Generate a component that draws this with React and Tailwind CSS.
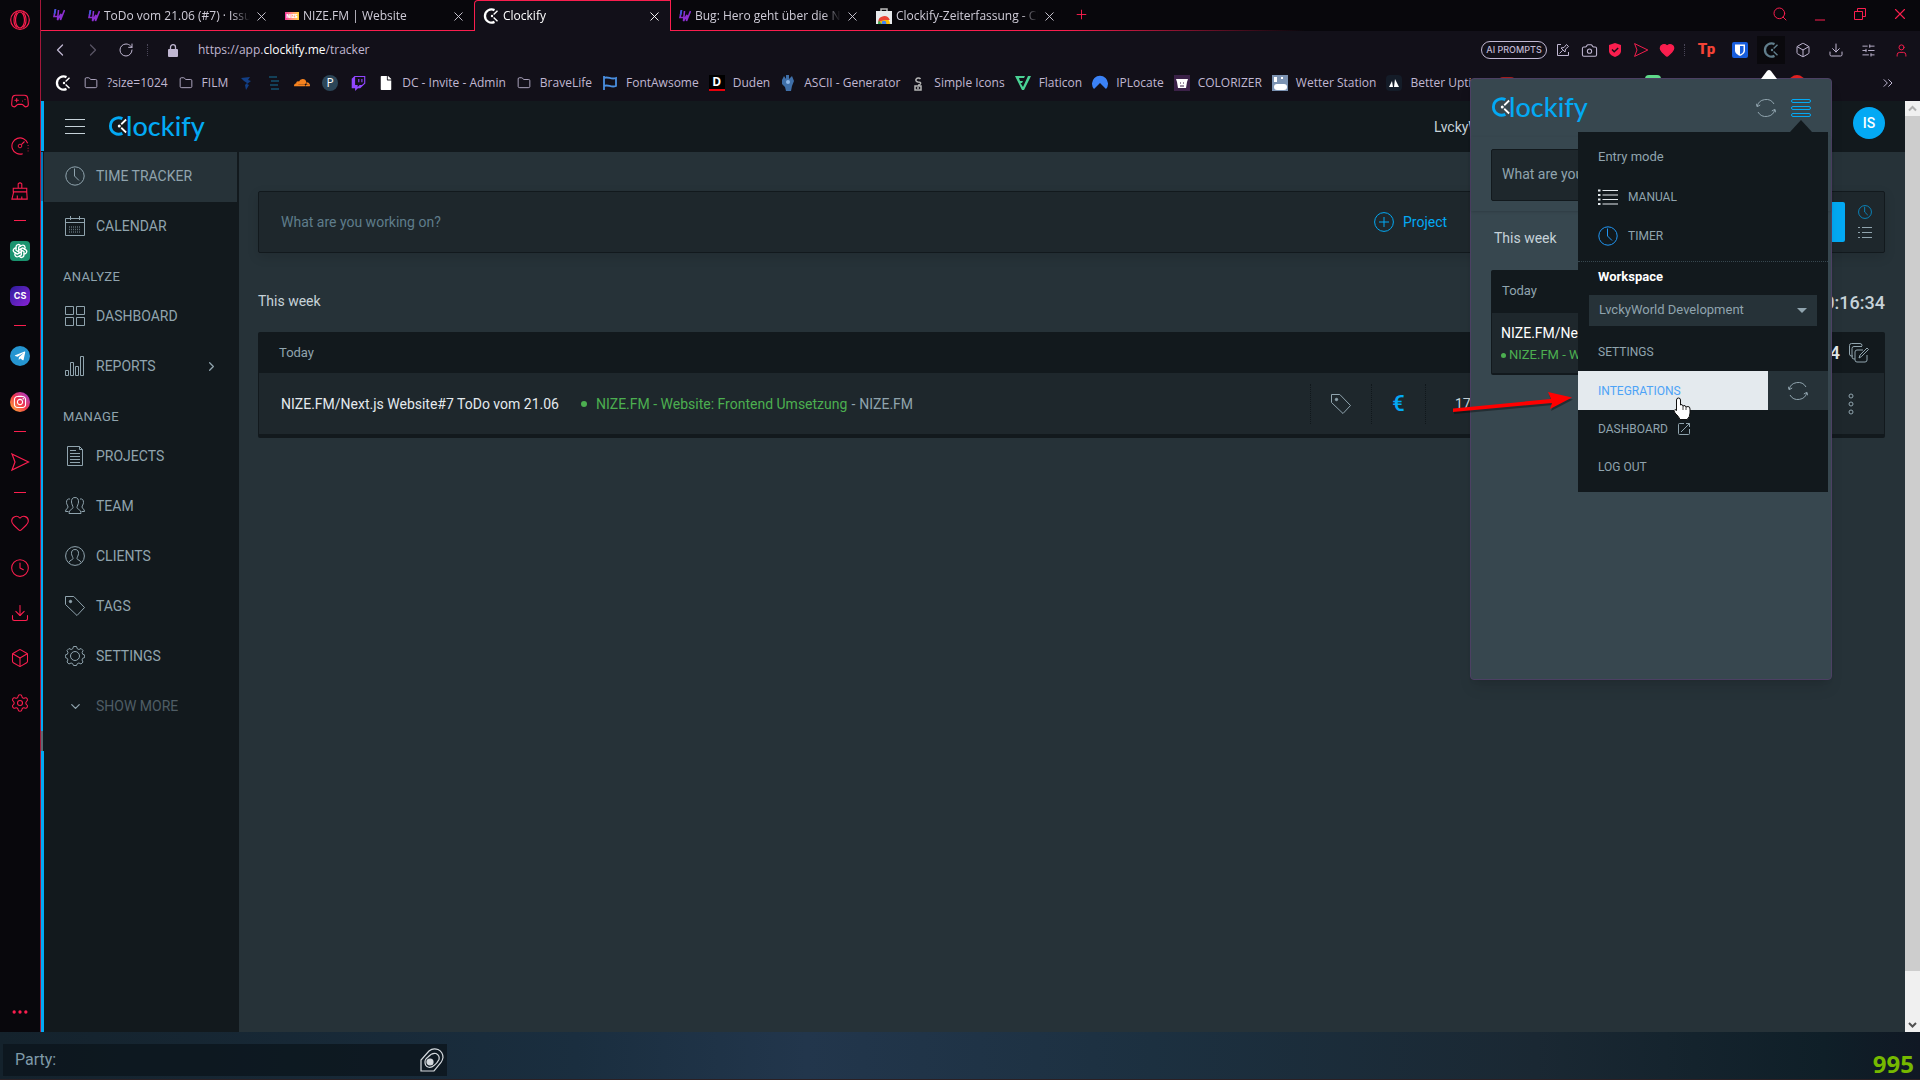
import {
  Camera, ChevronDown, ChevronLeft, ChevronRight, ChevronsRight, Clock, Box, Download, Ellipsis, Folder,
  Gamepad2, Heart, Minus, Plus, RotateCw, Search, Settings, SlidersHorizontal, User, X
} from 'lucide-react'
import { FaTwitch, FaInstagram, FaTelegramPlane, FaCloudflare, FaFile } from 'react-icons/fa'
import { TbBrandOpenai } from 'react-icons/tb'

// Thin line icon on a 20px grid
function Line({ children, className = 'w-5 h-5' }) {
  return (
    <svg viewBox="0 0 20 20" fill="none" stroke="currentColor" strokeWidth="1" className={`shrink-0 ${className}`} aria-hidden="true">
      {children}
    </svg>
  )
}

const ClockIcon = ({ className }) => (
  <Line className={className}><circle cx="10" cy="10" r="9.2" /><path d="M9.5 2.5V10l4.5 4.5" /></Line>
)
const TagIcon = ({ className }) => (
  <Line className={className}><path d="M.5.5h8.300l10.700 11-7.500 8L.5 8.500z" /><circle cx="5.500" cy="5.500" r="1.200" fill="currentColor" /></Line>
)
const ListIcon = ({ className }) => (
  <Line className={className}>
    <path d="M4.500 3.500H20M4.500 8H20M4.500 12.500H20M4.500 17H20" />
    <path d="M0 3.500h2.500M0 8h2.500M0 12.500h2.500M0 17h2.500" strokeWidth="2" />
  </Line>
)
const SmallListIcon = () => (
  <svg viewBox="0 0 14 14" className="w-3.5 h-3.5" stroke="currentColor" aria-hidden="true">
    <path d="M4 2.500h10M4 7.500h10M4 12.500h10" />
    <path d="M0 2.500h2M0 7.500h2M0 12.500h2" />
  </svg>
)
const SyncIcon = ({ className }) => (
  <Line className={className}>
    <path d="M1.200 8.500A9 8.500 0 0 1 18 6M18.800 11.500A9 8.500 0 0 1 2 14" />
    <path d="M0 5.500l1.200 3.200L4.200 7M20 14.500l-1.200-3.200L15.800 13" />
  </Line>
)
const SendIcon = ({ className }) => (
  <Line className={className}><path d="M2 2l16.500 8L2 18l3-8z" strokeWidth="1.200" /></Line>
)

function ClockifyMark({ className, arms = 'currentColor' }) {
  return (
    <svg viewBox="0 0 16 16" fill="none" className={`shrink-0 ${className}`} aria-hidden="true">
      <path d="M11.500 2.100A6.600 6.600 0 1 0 11.500 13.900" stroke="currentColor" strokeWidth="2.300" />
      <path d="M10.600 6.600L14.500 2.800M10.600 9.400l3.900 3.800" stroke={arms} strokeWidth="1.400" />
      <circle cx="9" cy="8" r="1.200" fill={arms} />
    </svg>
  )
}

function Logo() {
  return (
    <span className="flex items-center pl-px pb-0.5 text-[#03a9f4]">
      <ClockifyMark className="w-5 h-5" arms="#fff" />
      <span className="-ml-0.5 font-['Lato'] text-[27px] leading-7 font-medium">lockify</span>
    </span>
  )
}

function LwIcon() {
  return (
    <svg viewBox="0 0 12 12" className="w-3 h-3 shrink-0" fill="none" stroke="#8b2fd0" strokeWidth="1.600" aria-hidden="true">
      <path d="M2.500 0L1 7.500h4M5.500 1L4.500 11l3.500-6-.5 6L11.500 1" />
      <path d="M2.500 0L1.500 5" stroke="#3b5bdb" />
    </svg>
  )
}

function StoreIcon() {
  return (
    <svg viewBox="0 0 16 16" className="w-4 h-4 shrink-0" aria-hidden="true">
      <path d="M5 3V1h6v2" fill="none" stroke="#bbb" strokeWidth="1.500" />
      <path d="M0 3h16v13H0z" fill="#e8eaed" />
      <path d="M2 16a6 6 0 0 1 12 0z" fill="#fbbc04" />
      <path d="M2.200 14a6 6 0 0 1 11.600-2H8z" fill="#ea4335" />
      <path d="M2 16a6 6 0 0 1 1-3.500L5.500 16z" fill="#34a853" />
      <circle cx="8" cy="15" r="2.300" fill="#4285f4" />
    </svg>
  )
}

const NizeIcon = () => (
  <span className="w-3.5 h-2 shrink-0 bg-gradient-to-r from-pink-500 to-amber-300 text-[5px] leading-2 font-black text-white text-center">NIZE</span>
)

const TABS = [
  { title: 'ToDo vom 21.06 (#7) · Issue #7', icon: <LwIcon /> },
  { title: 'NIZE.FM | Website', icon: <NizeIcon /> },
  { title: 'Clockify', icon: <ClockifyMark className="w-4 h-4 text-white" />, active: true },
  { title: 'Bug: Hero geht über die Navbar', icon: <LwIcon /> },
  { title: 'Clockify-Zeiterfassung - Chrome', icon: <StoreIcon /> },
]

const folder = <Folder size={14} strokeWidth={1.5} />

const BOOKMARKS = [
  { icon: <ClockifyMark className="w-4 h-4 text-white" /> },
  { icon: folder, label: '?size=1024' },
  { icon: folder, label: 'FILM' },
  { icon: <svg viewBox="0 0 16 16" className="w-4 h-4"><path d="M3 3l9-1-2 3 3 1-4 3 2 1-3 5-1-5 2-2-3-2z" fill="#123f86" /></svg> },
  { icon: <svg viewBox="0 0 16 16" className="w-4 h-4" stroke="#15506e" strokeWidth="1.500"><path d="M3 2h8M5 6h8M4 10h8M5 14h8" /></svg> },
  { icon: <FaCloudflare size={16} color="#f6821f" /> },
  { icon: <span className="w-4 h-4 rounded-full bg-[#2c4658] text-white text-xs leading-4 text-center">P</span> },
  { icon: <FaTwitch size={15} color="#9146ff" /> },
  { icon: <FaFile size={14} color="#fff" />, label: 'DC - Invite - Admin' },
  { icon: folder, label: 'BraveLife' },
  { icon: <svg viewBox="0 0 16 16" className="w-4 h-4" fill="none" stroke="#4a8fe0" strokeWidth="1.800"><path d="M2 1v14M2 3c4-2 7 2 12 0v8c-5 2-8-2-12 0" /></svg>, label: 'FontAwsome' },
  { icon: <span className="w-4 h-4 bg-black border-b-2 border-red-600 text-white text-xs leading-3.5 text-center font-bold">D</span>, label: 'Duden' },
  { icon: <svg viewBox="0 0 16 16" className="w-4 h-4"><path d="M4 1l2 3V0h3v4l3-3 2 5-2 5-1 5H6l-1-4-3-3V5z" fill="#3f6fa8" /><circle cx="8" cy="7" r="2" fill="#8fb8e8" /></svg>, label: 'ASCII - Generator' },
  { icon: <svg viewBox="0 0 16 16" className="w-4 h-4" fill="none" stroke="#b5b5b5" strokeWidth="1.500"><path d="M10.500 4a2.500 2 0 1 0-2.500 3c4 0 3 3 0 3M5 11h6v4H5zM7 13h2" /></svg>, label: 'Simple Icons' },
  { icon: <svg viewBox="0 0 16 16" className="w-4 h-4" fill="#4ad295"><path d="M0 1h10l-1 2H4l1 3h3L7 8H5.500L8 12l5-11h3L9 15H7z" /></svg>, label: 'Flaticon' },
  { icon: <svg viewBox="0 0 16 16" className="w-4 h-4" fill="#3b82f6"><path d="M2 14A8 8 0 1 1 14 14L8 8z" /></svg>, label: 'IPLocate' },
  { icon: <svg viewBox="0 0 16 16" className="w-4 h-4"><path d="M0 0h16v16H0z" fill="#3b2148" /><path d="M2 4h12l-1 3-1 6H4L3 7z" fill="#fff" /><path d="M6 8h1M9 8h1M6 11h4" stroke="#3b2148" /></svg>, label: 'COLORIZER' },
  { icon: <svg viewBox="0 0 16 16" className="w-4 h-4"><path d="M0 0h16v16H0z" fill="#7c93b2" /><path d="M2 2h3v5H2zM9 2h2v2H9z" fill="#fff" /><rect x="2" y="9" width="13" height="6" rx="3" fill="#fff" /></svg>, label: 'Wetter Station' },
  { icon: <svg viewBox="0 0 16 16" className="w-4 h-4"><rect width="16" height="16" rx="4" fill="#141c28" /><path d="M3 12l3-6 1 6zM8 12l1-8 4 8z" fill="#fff" /></svg>, label: 'Better Uptime' },
]

const NAV = [
  { label: 'TIME TRACKER', icon: <ClockIcon />, active: true },
  { label: 'CALENDAR', icon: <Line><path d="M.5 2.500h19v17H.5zM.5 6.500h19M5.500 0v4M14.500 0v4" /><path d="M4 11h12M4 13.500h12M4 16h12" strokeWidth="1.500" strokeDasharray="1 1" opacity=".6" /></Line> },
  { heading: 'ANALYZE' },
  { label: 'DASHBOARD', icon: <Line><path d="M.5.5h8v8h-8zM11.500.5h8v8h-8zM.5 11.500h8v8h-8zM11.500 11.500h8v8h-8z" /></Line> },
  { label: 'REPORTS', icon: <Line><path d="M.5 14.500h3v5h-3zM5.500 6.500h3v13h-3zM10.500 10.500h3v9h-3zM15.500.5h3v19h-3z" /></Line>, more: true },
  { heading: 'MANAGE' },
  { label: 'PROJECTS', icon: <Line><path d="M2.500.5h12l3 3v16h-15zM14.500.5v3h3M5 4.500h6M5 7.500h10M5 10.500h10M5 13.500h10M5 16.500h10" /></Line> },
  { label: 'TEAM', icon: <Line><path d="M10 1.500c3 0 3.500 2 3.500 4.500 0 2-1.500 4-1.500 5.500 0 2 4 1.500 4 6H4c0-4.500 4-4 4-6C8 10 6.500 8 6.500 6c0-2.500.5-4.500 3.500-4.500z" /><path d="M5 3C2.500 2.500 1.500 4 1.500 6.500c0 2 1.500 3 1.500 4.500S.5 13 .5 15.500h3M15 3c2.500-.5 3.500 1 3.500 3.500 0 2-1.500 3-1.500 4.500s2.500 2 2.500 4.500h-3" /></Line> },
  { label: 'CLIENTS', icon: <Line><circle cx="10" cy="10" r="9.400" /><path d="M10 3.500c3 0 3.500 2 3.500 4 0 2-1.500 3.500-1.500 5s3.500 1.500 4 4M10 3.500c-3 0-3.500 2-3.500 4 0 2 1.500 3.500 1.500 5s-3.500 1.500-4 4" /></Line> },
  { label: 'TAGS', icon: <TagIcon /> },
  { label: 'SETTINGS', icon: <Line><circle cx="10" cy="10" r="4.500" /><path d="M8.500.5h3l.8 2.300 1.600.7 2.200-1 1.900 2-.9 2.200.7 1.600 1.900.7v2.500l-2 .8-.7 1.600 1 2.200-2 1.900-2.100-1-1.600.7-.8 1.800h-3l-.8-1.800-1.600-.7-2.200 1-1.900-2 .9-2.100-.7-1.600-1.900-.8V9l2-.7.7-1.600-1-2.200 2-2 2.200 1 1.500-.7z" /></Line> },
]

function TabBar() {
  return (
    <div className="flex h-[31px] bg-[#08070c] text-[#cfccd8]">
      <button aria-label="Pinned tab" className="w-[39px] h-full flex items-center pl-3 border-b border-[#fa1e4e]"><LwIcon /></button>
      {TABS.map(tab => (
        <div
          key={tab.title}
          className={`w-[197px] flex items-center gap-1 pl-2 pr-2 border-[#fa1e4e] ${
            tab.active ? 'border-t border-x rounded-tl bg-[#121019] text-white' : 'border-b pt-0.5'
          }`}
        >
          {tab.icon}
          <span className="flex-1 min-w-0 overflow-hidden whitespace-nowrap [mask-image:linear-gradient(to_right,#000_88%,transparent)]">{tab.title}</span>
          <button aria-label={`Close ${tab.title}`}><X size={15} strokeWidth={1.5} /></button>
        </div>
      ))}
      <div className="flex-1 flex flex-col justify-between text-[#fa1e4e]">
        <div className="flex justify-between">
          <button aria-label="New tab" className="w-8 h-7 flex items-center justify-center"><Plus size={15} strokeWidth={1.5} /></button>
          <div className="flex">
            <button aria-label="Search" className="w-10 h-7 flex items-center justify-center"><Search size={16} strokeWidth={1.5} /></button>
            <button aria-label="Minimize" className="w-10 h-7 flex items-end justify-center"><Minus size={16} strokeWidth={1.5} /></button>
            <button aria-label="Restore" className="w-10 h-7 flex items-center justify-center">
              <svg viewBox="0 0 12 12" className="w-3 h-3" fill="none" stroke="currentColor"><path d="M.5 3.500h8v8h-8zM3.500 3.500v-3h8v8h-3" /></svg>
            </button>
            <button aria-label="Close window" className="w-10 h-7 flex items-center justify-center"><X size={18} strokeWidth={1.5} /></button>
          </div>
        </div>
        <div className="h-px w-60 bg-gradient-to-r from-[#fa1e4e] to-transparent" />
      </div>
    </div>
  )
}

function Toolbar() {
  const small = 'w-[26px] h-7 flex items-center justify-center'
  const wide = 'w-[33px] h-7 flex items-center justify-center'
  return (
    <div className="flex items-center h-[38px] pl-0.5 pr-0.5 text-[#c0b7d2]">
      <button aria-label="Back" className={wide}><ChevronLeft size={20} strokeWidth={1.5} /></button>
      <button aria-label="Forward" className={`${wide} opacity-40`}><ChevronRight size={20} strokeWidth={1.5} /></button>
      <button aria-label="Reload" className={wide}><RotateCw size={16} strokeWidth={1.5} /></button>
      <span className="w-1.5 h-3 border-r border-dotted border-[#4a4658]" />
      <svg viewBox="0 0 10 13" className="w-2.5 h-[13px] ml-5 shrink-0" aria-hidden="true">
        <path d="M2.500 6V3.200a2.500 2.500 0 0 1 5 0V6" fill="none" stroke="currentColor" strokeWidth="1.300" />
        <rect y="5" width="10" height="8" rx="1" fill="currentColor" />
      </svg>
      <div className="flex-1 min-w-0 ml-5">
        https://app.<span className="text-white">clockify.me</span>/tracker
      </div>
      <button className="w-[66px] h-[18px] mr-[3px] rounded-full border border-current text-[9px] leading-4 font-medium font-['Inter']">AI PROMPTS</button>
      <button aria-label="Pin" className={small}>
        <svg viewBox="0 0 14 14" className="w-3.5 h-3.5" fill="none" stroke="currentColor"><path d="M5 1.500H1.500v11h11V9M3.500 10.500l3-3M5 5l4 4 .5-3 3-2.500-2-2-2.500 3z" /></svg>
      </button>
      <button aria-label="Snapshot" className={small}><Camera size={17} strokeWidth={1.500} /></button>
      <button aria-label="Ad blocker" className={small}>
        <svg viewBox="0 0 14 16" className="w-3.5 h-4"><path d="M7 1l6 2v6c0 3-3 5-6 6-3-1-6-3-6-6V3z" fill="#fa1e4e" /><path d="M4 7.500l2.200 2.200L10.200 6" fill="none" stroke="#121019" strokeWidth="1.500" /></svg>
      </button>
      <button aria-label="My Flow" className={`${small} text-[#fa1e4e]`}><SendIcon className="w-4 h-4" /></button>
      <button aria-label="Pinboards" className={`${small} text-[#fa1e4e]`}><Heart size={16} fill="currentColor" /></button>
      <span className="h-3 ml-1 mr-[5px] border-r border-dotted border-[#4a4658]" />
      <button aria-label="Toolkit" className={`${wide} text-[#f44336] font-black text-[15px] font-['Roboto']`}>Tp</button>
      <button aria-label="Password manager" className={wide}>
        <svg viewBox="0 0 16 16" className="w-4 h-4"><rect width="16" height="16" rx="2" fill="#175ddc" /><path d="M3 2.500h10v6c0 3-3 4.500-5 5.500-2-1-5-2.500-5-5.500z" fill="#fff" /><path d="M8 4h3.500v4.500c0 2-1.500 3-3.500 4z" fill="#175ddc" /></svg>
      </button>
      <button aria-label="Clockify" className="w-7 h-7 mx-px flex items-center justify-center bg-[#0a090d] text-[#607d8b]"><ClockifyMark className="w-4 h-4" /></button>
      <button aria-label="Extensions" className={wide}><Box size={16} strokeWidth={1.500} /></button>
      <button aria-label="Downloads" className={wide}><Download size={16} strokeWidth={1.500} /></button>
      <button aria-label="Easy setup" className={wide}><SlidersHorizontal size={15} strokeWidth={1.500} /></button>
      <button aria-label="Profile" className={`${wide} text-[#fa1e4e]`}><User size={15} strokeWidth={1.500} /></button>
    </div>
  )
}

function Bookmarks() {
  return (
    <div className="flex items-center h-8 pb-1 pl-3.5 pr-6 text-[#c0b7d2]">
      <div className="flex-1 min-w-0 flex items-center overflow-hidden">
        {BOOKMARKS.map((b, i) => (
          <a key={i} href="#" aria-label={b.label || 'Bookmark'} className={`flex items-center gap-2 shrink-0 whitespace-nowrap ${b.label ? 'pr-2.5' : 'pr-3'}`}>
            <span className="w-4 flex justify-center">{b.icon}</span>
            {b.label}
          </a>
        ))}
        <span className="w-4 h-3 rounded bg-[#a01c1c] shrink-0" />
        <span className="w-4 h-4 ml-[130px] rounded bg-[#5fd98a] shrink-0" />
        <span className="w-4 h-4 ml-[128px] rounded-full bg-[#e02020] shrink-0" />
      </div>
      <button aria-label="More bookmarks"><ChevronsRight size={16} strokeWidth={1.500} /></button>
    </div>
  )
}

function OperaSidebar() {
  const item = 'h-[45px] w-full flex items-center justify-center'
  const brand = 'h-[46px] w-full flex items-center justify-center'
  const dash = <span className="h-[15px] flex items-center"><span className="w-3 h-px bg-current" /></span>
  return (
    <aside className="w-[41px] shrink-0 flex flex-col items-center bg-[#08070c] text-[#fa1e4e] border-r border-[#a3173a]">
      <button aria-label="Opera" className="h-10 flex items-center">
        <svg viewBox="0 0 20 20" className="w-5 h-5" fill="none" stroke="currentColor" strokeWidth="1.200"><circle cx="10" cy="10" r="9.300" /><ellipse cx="10" cy="10" rx="4.500" ry="8" /><path d="M13 2.500c4 3 4 12 0 15M7 2.500c-4 3-4 12 0 15" /></svg>
      </button>
      <button aria-label="GX Corner" className={`${item} mt-[38px]`}><Gamepad2 size={20} strokeWidth={1.300} /></button>
      <button aria-label="GX Control" className={item}>
        <Line className="w-[18px] h-[18px]"><path d="M13 18.500A9 9 0 1 1 18.500 7M11.500 8.500L15 5" strokeWidth="1.200" /><circle cx="10" cy="10" r="2" /><path d="M19 9v7" strokeDasharray="1 2" /></Line>
      </button>
      <button aria-label="GX Cleaner" className={item}>
        <Line className="w-[18px] h-[18px]"><path d="M8 7V2q2-2 4 0v5M2.500 7h15v4h-15zM3 11L1 19h17l-.5-8M7 15v4M12 16v3" strokeWidth="1.200" /></Line>
      </button>
      {dash}
      <button aria-label="ChatGPT" className={item}><span className="w-5 h-5 rounded bg-[#1a936f] text-white flex items-center justify-center"><TbBrandOpenai size={16} /></span></button>
      <button aria-label="ChatSonic" className={item}><span className="w-5 h-5 rounded-md bg-gradient-to-br from-[#2b1a9c] to-[#8a1fd6] text-white text-[9px] leading-5 font-bold font-['Inter']">CS</span></button>
      {dash}
      <button aria-label="Telegram" className={brand}><span className="w-5 h-5 rounded-full bg-[#2595d1] text-white flex items-center justify-center"><FaTelegramPlane size={12} /></span></button>
      <button aria-label="Instagram" className={item}><span className="w-5 h-5 rounded-full bg-gradient-to-tr from-[#fdb026] via-[#f0304a] to-[#a01fd8] text-white flex items-center justify-center"><FaInstagram size={14} /></span></button>
      {dash}
      <button aria-label="My Flow" className={brand}><SendIcon /></button>
      {dash}
      <button aria-label="Pinboards" className={item}><Heart size={20} strokeWidth={1.300} /></button>
      <button aria-label="History" className={item}><Clock size={20} strokeWidth={1.300} /></button>
      <button aria-label="Downloads" className={item}><Download size={20} strokeWidth={1.300} /></button>
      <button aria-label="Extensions" className={item}><Box size={20} strokeWidth={1.300} /></button>
      <button aria-label="Settings" className={item}><Settings size={20} strokeWidth={1.300} /></button>
      <button aria-label="More" className="mt-auto h-10 flex items-center"><Ellipsis size={20} /></button>
    </aside>
  )
}

function Sidebar() {
  return (
    <nav className="w-[195px] shrink-0 bg-[#12191d] text-[#90a4ae] text-sm border-r-2 border-[#12191d]">
      {NAV.map(item =>
        item.heading ? (
          <h2 key={item.heading} className="h-10 pt-[15px] pl-[19px] text-[13px] leading-5 tracking-wide">{item.heading}</h2>
        ) : (
          <a key={item.label} href="#" className={`h-[50px] flex items-center gap-[11px] pl-[21px] pr-[18px] pb-0.5 ${item.active ? 'bg-[#263238]' : ''}`}>
            {item.icon}
            <span className="flex-1">{item.label}</span>
            {item.more && <ChevronRight size={15} strokeWidth={2} />}
          </a>
        )
      )}
      <button className="h-[50px] w-full flex items-center gap-[11px] pl-[21px] pb-0.5 text-[#4f5d65]">
        <span className="w-5 flex justify-center"><ChevronDown size={15} className="text-[#90a4ae]" /></span>
        SHOW MORE
      </button>
    </nav>
  )
}

function Tracker() {
  return (
    <main className="flex-1 min-w-0 bg-[#263238] pl-[19px] pr-5 pt-[39px]">
      <form className="flex items-center h-[62px] rounded-xs border border-[#12191d] bg-[#1e272c] shadow-[0_4px_12px_rgba(0,0,0,0.12)]">
        <input aria-label="Description" placeholder="What are you working on?" className="flex-1 min-w-0 h-full pl-[22px] text-sm text-[#c6d2d9] placeholder-[#5f7d8b] bg-transparent outline-none" />
        <button type="button" className="w-[372px] flex items-center gap-[9px] text-sm text-[#03a9f4]">
          <Line><circle cx="10" cy="10" r="9.400" /><path d="M10 5v10M5 10h10" /></Line>
          Project
        </button>
        <button type="button" aria-label="Start" className="w-[99px] h-10 rounded-xs bg-[#03a9f4]" />
        <div className="w-[39px] flex flex-col items-center gap-1.5 text-[#90a4ae]">
          <button type="button" aria-label="Timer mode" className="text-[#03a9f4]"><ClockIcon className="w-3.5 h-3.5" /></button>
          <button type="button" aria-label="Manual mode"><SmallListIcon /></button>
        </div>
      </form>

      <div className="flex items-center justify-between mt-[33px] h-[30px] text-[#c6d2d9]">
        <span className="text-sm">This week</span>
        <span className="text-lg font-medium pt-1">00:16:34</span>
      </div>

      {/* Today */}
      <section className="mt-[16px] rounded-xs border border-[#12191d] border-b-4 bg-[#1e272c]">
        <div className="flex items-center justify-between h-10 pl-5 pr-[15px] bg-[#12191d] text-[#90a4ae]">
          <span className="text-[13px]">Today</span>
          <span className="flex items-center gap-[9px]">
            <span className="text-lg font-medium text-[#e4eaee]">00:16:34</span>
            <button aria-label="Bulk edit">
              <Line><path d="M4 13H2.500q-2 0-2-2V2.500q0-2 2-2H11q2 0 2 2V3M6 16H5q-2 0-2-2V5.500q0-2 2-2h8M14 7H8Q6 7 6 9v8q0 2 2 2h8q2 0 2-2v-5M10 15l1-3 7-7 1.500 1.500-7 7z" /></Line>
            </button>
          </span>
        </div>
        <div className="flex items-center h-[61px] pl-[22px] text-sm">
          <span className="text-[#e4eaee]">NIZE.FM/Next.js Website#7 ToDo vom 21.06</span>
          <span className="flex-1 flex items-center pl-[22px] text-[#90a4ae]">
            <span className="w-1.5 h-1.5 mr-[9px] rounded-full bg-[#4caf50]" />
            <span className="text-[#4caf50]">NIZE.FM - Website: Frontend Umsetzung</span>
            <span className="ml-1">-</span>
            <span className="ml-1">NIZE.FM</span>
          </span>
          <button aria-label="Tags" className="w-[61px] h-10 flex items-center pl-5 border-l border-dotted border-[#10171b] text-[#90a4ae]"><TagIcon /></button>
          <button aria-label="Billable" className="w-[54px] h-10 border-l border-dotted border-[#10171b] text-[22px] leading-10 text-[#03a9f4] font-medium">€</button>
          <span className="w-[393px] h-10 leading-10 pl-[29px] border-l border-dotted border-[#10171b] text-[#c6d2d9]">17:44</span>
          <button aria-label="Entry actions" className="w-[66px] flex justify-center text-[#90a4ae]">
            <svg viewBox="0 0 6 22" className="w-1.5 h-[22px]" fill="none" stroke="currentColor"><circle cx="3" cy="3" r="2" /><circle cx="3" cy="11" r="2" /><circle cx="3" cy="19" r="2" /></svg>
          </button>
        </div>
      </section>
    </main>
  )
}

function Menu() {
  return (
    <div className="absolute right-[3px] top-[53px] w-[250px] h-[360px] bg-[#12191d] text-xs leading-5 text-[#90a4ae]">
      <svg viewBox="0 0 22 12" className="absolute right-4 -top-3 w-[22px] h-3" fill="#12191d"><path d="M11 0l11 12H0z" /></svg>
      <p className="pt-[15px] pl-5 h-[45px] text-[13px]">Entry mode</p>
      <button className="w-full h-[39px] flex items-center gap-2.5 pl-5"><ListIcon className="w-5 h-5 text-[#e4eaee]" />MANUAL</button>
      <button className="w-full h-[39px] flex items-center gap-2.5 pl-5"><ClockIcon className="w-5 h-5 text-[#2196f3]" />TIMER</button>
      <div className="mt-1.5 pt-[5px] border-t border-dotted border-[#37474f]">
        <label htmlFor="workspace" className="block pl-5 text-[13px] leading-5 font-bold text-white">Workspace</label>
        <div className="relative mt-2 mx-[11px]">
          <select id="workspace" className="appearance-none w-full h-[31px] pl-2.5 pb-0.5 bg-[#263238] text-[13px] text-[#90a4ae]">
            <option>LvckyWorld Development</option>
          </select>
          <svg viewBox="0 0 10 5" className="absolute right-2.5 top-[13px] w-2.5 h-[5px] pointer-events-none" fill="#90a4ae"><path d="M0 0h10L5 5z" /></svg>
        </div>
      </div>
      <button className="block w-full h-[39px] mt-1.5 pl-5 text-left">SETTINGS</button>
      <div className="flex h-[39px]">
        <button className="flex-1 pl-5 text-left bg-[#e4eaee] text-[#4da3f7]">INTEGRATIONS</button>
        <button aria-label="Sync integrations" className="w-[60px] flex items-center justify-center bg-[#263238]"><SyncIcon /></button>
      </div>
      <button className="w-full h-[38px] flex items-center gap-2.5 pl-5">
        DASHBOARD
        <svg viewBox="0 0 12 12" className="w-3 h-3" fill="none" stroke="currentColor"><path d="M6 .5H1.500q-1 0-1 1v9q0 1 1 1h9q1 0 1-1V6M3 9L11.500.5M8 .5h3.500V4" /></svg>
      </button>
      <button className="block w-full h-[38px] pl-5 text-left">LOG OUT</button>

      {/* Pointer */}
      <svg viewBox="0 0 18 24" className="absolute left-[95px] top-[265px] w-[18px] h-6" fill="#fff" stroke="#111"><path d="M5.500 1q2 0 2 2v5l1.500-.5 1 1.500 2-.5 1 1.500 2-.5q2 0 2 2.500v4q0 4-3 6.500H7q-1-3-5-6.500-2-3 0-3.500l1.500 1V3q0-2 2-2z" /><path d="M10 9v4M13 10v3" fill="none" strokeWidth=".800" /></svg>
    </div>
  )
}

function Popup() {
  return (
    <div className="absolute right-[88px] top-[78px] w-[362px] h-[602px] rounded border border-[#4c4063] bg-[#37474f] text-sm shadow-lg">
      <svg viewBox="0 0 16 9" className="absolute right-[54px] -top-[9px] w-4 h-[9px]" fill="#fff"><path d="M6 1q2-2 4 0l6 8H0z" /></svg>
      <div className="flex items-center h-[58px] pl-[19px] pr-5">
        <Logo />
        <button aria-label="Sync" className="ml-auto text-[#90a4ae]"><SyncIcon /></button>
        <button aria-label="Menu" className="ml-[15px] text-[#03a9f4]">
          <Line><rect x=".5" y="1.500" width="19" height="3" rx="1.500" /><rect x=".5" y="8.500" width="19" height="3" rx="1.500" /><rect x=".5" y="15.500" width="19" height="3" rx="1.500" /></Line>
        </button>
      </div>
      <div className="pl-5 pr-5 pt-3 pb-[10px] shadow-sm">
        <input aria-label="Popup description" placeholder="What are you working on?" className="block w-full h-[52px] pl-2.5 pb-0.5 rounded-xs border border-[#12191d] bg-[#1e272c] placeholder-[#90a4ae]" />
      </div>
      <p className="pt-[17px] pl-[23px] leading-5 text-[#c6d2d9]">This week</p>
      <section className="mt-[22px] mx-5 rounded-xs border border-[#12191d] border-b-2 bg-[#1e272c]">
        <div className="h-[42px] pl-2.5 leading-10 text-[13px] bg-[#12191d] text-[#90a4ae]">Today</div>
        <div className="h-[60px] pl-[9px] pt-[9px] overflow-hidden whitespace-nowrap">
          <p className="leading-[22px] text-white">NIZE.FM/Next.js Website</p>
          <p className="flex items-center gap-[3px] leading-[22px] text-[13px] text-[#4caf50]"><span className="w-[5px] h-[5px] rounded-full bg-current" />NIZE.FM - Website</p>
        </div>
      </section>
      <Menu />
      {/* Arrow pointing at the integrations entry */}
      <svg viewBox="0 0 124 24" className="absolute -left-[19px] top-[311px] w-[124px] h-6" aria-hidden="true">
        <path d="M1 18.500L99 9.500 96 3l24 4.500L98 19l2-6L1 22z" fill="#000" opacity=".35" transform="translate(1 2)" />
        <path d="M1 18.500L99 9 96 2l24 5.500L98 19l2-6L1 22z" fill="#f00" />
      </svg>
    </div>
  )
}

function Scrollbar() {
  return (
    <div className="w-[15px] shrink-0 flex flex-col bg-[#f0f0f0]">
      <svg viewBox="0 0 15 15" className="w-[15px] h-[15px]" fill="none" stroke="#b0b0b0" strokeWidth="2"><path d="M4 9.500L7.500 6 11 9.500" /></svg>
      <div className="flex-1 bg-[#cdcdcd]" />
      <div className="h-[46px]" />
      <svg viewBox="0 0 15 15" className="w-[15px] h-[15px]" fill="none" stroke="#505050" strokeWidth="2"><path d="M4 6l3.500 3.500L11 6" /></svg>
    </div>
  )
}

export default function App() {
  return (
    <div className="relative min-h-screen flex flex-col overflow-hidden bg-[#121019] font-['Open_Sans',sans-serif] text-xs">
      <div className="flex-1 flex">
        <OperaSidebar />
        <div className="flex-1 min-w-0 flex flex-col">
          <TabBar />
          <Toolbar />
          <Bookmarks />

          <div className="flex-1 flex font-['Roboto',sans-serif]">
            <div className="w-[3px] shrink-0 flex flex-col bg-[#12191d]">
              <span className="h-[50px] bg-[#03a9f4]" />
              <span className="mt-px h-[49px] w-0.5 bg-[#0277bd]" />
              <span className="h-[530px] w-0.5 bg-[#03a9f4]" />
              <span className="h-5 w-0.5 bg-[#5b6b73]" />
              <span className="flex-1 bg-[#03a9f4]" />
            </div>
            <div className="flex-1 min-w-0 flex flex-col">
              <header className="flex items-center h-[51px] pl-[21px] pr-5 bg-[#12191d]">
                <button aria-label="Toggle menu" className="mr-[22px] text-[#c6d2d9]">
                  <Line><path d="M0 2.500h20M0 9.500h20M0 16.500h20" /></Line>
                </button>
                <Logo />
                <span className="ml-auto w-[419px] text-sm text-[#c6d2d9]">LvckyWorld Development</span>
                <button className="w-8 h-8 mb-[7px] rounded-full bg-[#03a9f4] text-white text-sm font-medium">IS</button>
              </header>
              <div className="flex-1 flex">
                <Sidebar />
                <Tracker />
              </div>
            </div>
            <Scrollbar />
          </div>
        </div>
      </div>

      <footer className="flex items-center justify-between h-12 pl-[3px] pr-1.5 border-b border-[#2b2024] bg-[linear-gradient(90deg,#14222c,#1a2e3f_30%,#22364c_42%,#1c3040_60%,#1a2833_80%,#0f1f28_95%,#101824)]">
        <div className="flex items-center justify-between w-[444px] h-8 mt-2 pl-3 pr-[3px] bg-[#0b141b]/75 text-base font-['Roboto'] text-[#7f9aa8]">
          Party:
          <svg viewBox="0 0 24 24" className="w-6 h-6" fill="none" stroke="#d5dade" strokeWidth="1.200"><path d="M1 23V12L9 3q4-3.500 9-1.500 5 2.500 5 8-.5 3-2 5L14 23z" /><path d="M5 14q0-3 3-5 4-4.500 8-3.500 4 2 3 6-2 4-5 6-3 2.500-6 1.500-3-1-3-5z" /><circle cx="10" cy="14" r="3" fill="#d5dade" /></svg>
        </div>
        <span className="pt-4 text-2xl font-bold text-[#76b900]">995</span>
      </footer>

      <div className="font-['Roboto',sans-serif]"><Popup /></div>
    </div>
  )
}
